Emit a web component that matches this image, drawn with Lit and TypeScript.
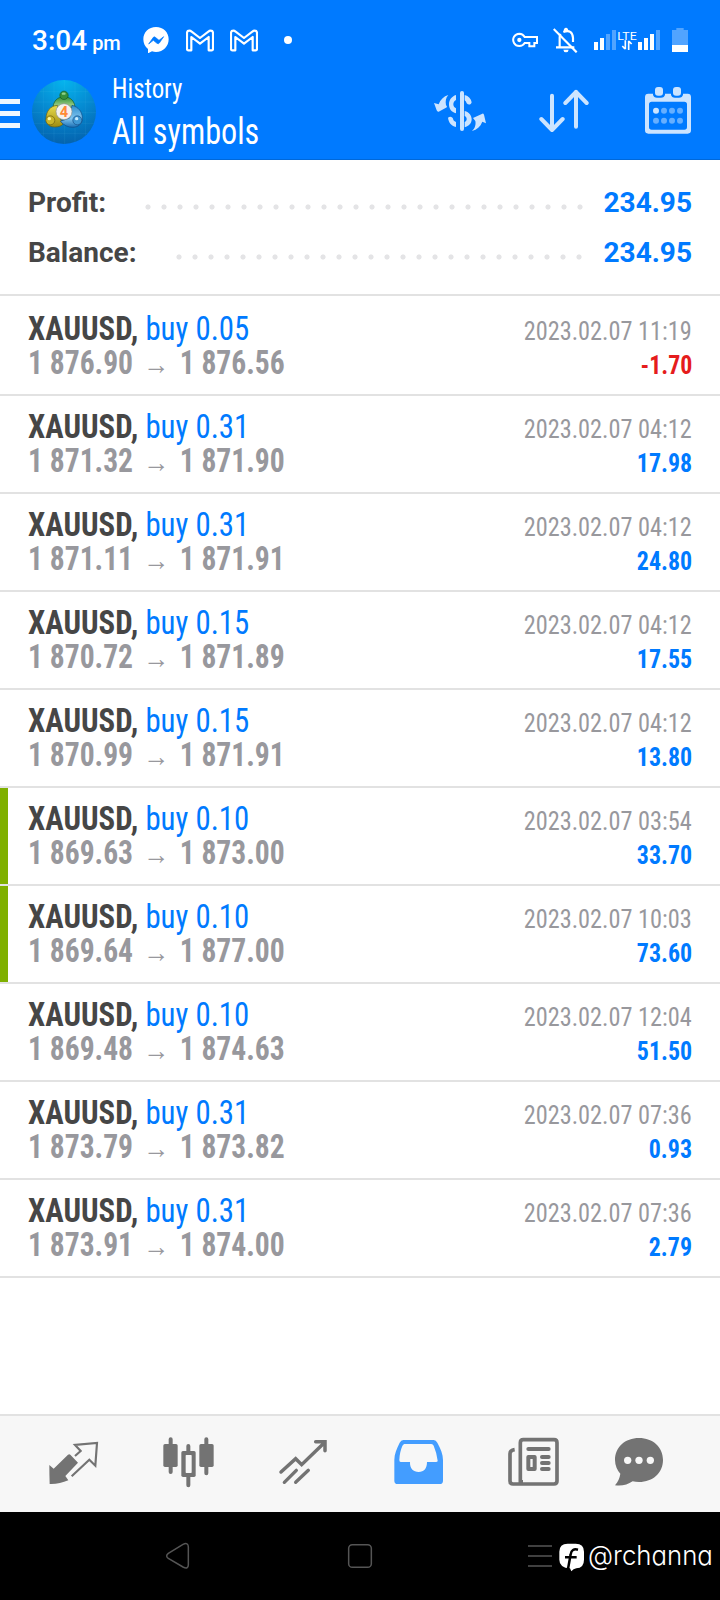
import { LitElement, html, css, svg } from "lit";
import { customElement, property } from "lit/decorators.js";

interface Deal {
  volume: string;
  open: string;
  close: string;
  time: string;
  profit: string;
  marked?: boolean;
}

const DEALS: Deal[] = [
  { volume: "0.05", open: "1 876.90", close: "1 876.56", time: "2023.02.07 11:19", profit: "-1.70" },
  { volume: "0.31", open: "1 871.32", close: "1 871.90", time: "2023.02.07 04:12", profit: "17.98" },
  { volume: "0.31", open: "1 871.11", close: "1 871.91", time: "2023.02.07 04:12", profit: "24.80" },
  { volume: "0.15", open: "1 870.72", close: "1 871.89", time: "2023.02.07 04:12", profit: "17.55" },
  { volume: "0.15", open: "1 870.99", close: "1 871.91", time: "2023.02.07 04:12", profit: "13.80" },
  { volume: "0.10", open: "1 869.63", close: "1 873.00", time: "2023.02.07 03:54", profit: "33.70", marked: true },
  { volume: "0.10", open: "1 869.64", close: "1 877.00", time: "2023.02.07 10:03", profit: "73.60", marked: true },
  { volume: "0.10", open: "1 869.48", close: "1 874.63", time: "2023.02.07 12:04", profit: "51.50" },
  { volume: "0.31", open: "1 873.79", close: "1 873.82", time: "2023.02.07 07:36", profit: "0.93" },
  { volume: "0.31", open: "1 873.91", close: "1 874.00", time: "2023.02.07 07:36", profit: "2.79" },
];

/* Icons are drawn on a grid three times finer than their size on screen. */
const icon = (x: number, y: number, w: number, h: number, body: unknown) => html`<svg
  width=${w / 3} height=${h / 3} viewBox="${x} ${y} ${w} ${h}" fill="none">${body}</svg>`;

@customElement("status-bar")
class StatusBar extends LitElement {
  static styles = css`
    :host { display: flex; align-items: center; height: 48px; padding: 16px 32px 0; color: #fff; }
    svg { display: block; flex: none; }
    .time { font-size: 28px; font-weight: 500; line-height: 34px; width: 111px; white-space: nowrap; padding-top: 4px; }
    .time small { font-size: 20px; margin-left: 5px; }
    .left { display: flex; align-items: center; gap: 16px; }
    .left .dot { margin-left: 10px; }
    .right { display: flex; align-items: center; margin-left: auto; }
    .right .bell { margin-left: 15px; }
    .right .cell { margin-left: 16px; }
    .right .battery { margin-left: 11px; }
  `;
  render() {
    const mail = icon(558, 84, 84, 69, svg`
      <path d="M561 96v48q0 4 4 4h9V108l26 20 26-20v40h9q4 0 4-4V96q0-7-7-7-4 0-7 3l-25 19-25-19q-3-3-7-3-7 0-7 7z"
        stroke="#fff" stroke-width="6.5" stroke-linejoin="round"/>`);
    return html`
      <div class="time">3:04<small>pm</small></div>
      <div class="left">
        ${icon(429, 81, 81, 78, svg`
          <path d="M468 81c-22 0-38 16-38 37 0 12 5 22 14 29v13l12-6c4 1 8 2 12 2 22 0 38-17 38-38s-16-37-38-37z" fill="#fff"/>
          <path d="M446 132l14-20q3-3 6 0l11 9 14-11-13 19q-3 4-7 1l-11-9z" fill="#007aff" stroke="#007aff" stroke-width="2" stroke-linejoin="round"/>`)}
        ${mail}${mail}
        <span class="dot">${icon(852, 108, 24, 24, svg`<circle cx="864" cy="120" r="12" fill="#fff"/>`)}</span>
      </div>
      <div class="right">
        ${icon(456, 97, 78, 48, svg`
          <path d="M478 102a18.500 18.500 0 1 0 16 28h14v10h15v-10h8v-18h-37a18.500 18.500 0 0 0-16-10z" stroke="#fff" stroke-width="6"/>
          <circle cx="478" cy="121" r="6.500" fill="#fff"/>`)}
        <span class="bell">${icon(579, 82, 75, 78, svg`
          <path d="M588 143h55M599 143v-30q0-6 3-10M610 97q27-10 29 18v12" stroke="#fff" stroke-width="6.500"/>
          <path d="M611 95q0-11 7-11t7 11zM610 150h16q-1 8-8 8t-8-8z" fill="#fff"/>
          <path d="M581 88l69 70" stroke="#fff" stroke-width="6.500"/>`)}</span>
        <span class="cell">${icon(702, 84, 201, 72, svg`
          <path d="M702 126h12v24h-12zM720 114h12v36h-12zM834 126h12v24h-12zM852 114h12v36h-12zM870 102h12v48h-12z" fill="#fff"/>
          <path d="M738 102h12v48h-12zM756 90h12v60h-12zM888 90h12v60h-12z" fill="#fff" fill-opacity=".32"/>
          <text x="772" y="120" font-size="34" textLength="58" lengthAdjust="spacingAndGlyphs" fill="#fff">LTE</text>
          <path d="M796 121v27M795 147l-8-9M806 150v-28M807 124l8 8" stroke="#fff" stroke-width="5"/>`)}</span>
        <span class="battery">${icon(936, 84, 48, 72, svg`
          <path d="M936 90h13v-6h22v6h13v45h-48z" fill="#fff" fill-opacity=".32"/>
          <path d="M936 135h48v21h-48z" fill="#fff"/>`)}</span>
      </div>`;
  }
}

@customElement("app-bar")
class AppBar extends LitElement {
  static styles = css`
    :host { display: flex; align-items: center; height: 96px; color: #fff; box-shadow: inset 0 -1px #0068d9; box-sizing: border-box; }
    svg { display: block; flex: none; }
    .menu { width: 20px; margin-right: 12px; padding-top: 3px; }
    .titles { margin-left: 16px; font-family: "Roboto Condensed", Roboto, sans-serif; font-stretch: 75%; white-space: nowrap; }
    .sub, .title { transform-origin: left; line-height: 40px; }
    .sub { font-size: 27px; height: 42px; line-height: 39px; margin-top: -2px; transform: scaleX(0.922); }
    .title { font-size: 36px; transform: scaleX(0.895); }
    .actions { display: flex; align-items: center; margin: 0 29px 0 auto; padding-bottom: 2px; }
    .sort { margin: 0 56px 0 52px; }
  `;
  render() {
    return html`
      <div class="menu">${icon(0, 294, 60, 93, svg`<path d="M0 297h60v15H0zM0 333h60v15H0zM0 369h60v15H0z" fill="#fff" fill-opacity=".93"/>`)}</div>
      ${icon(36, 30, 192, 192, svg`
        <defs>
          <radialGradient id="sky" cx=".5" cy="0" r="1"><stop offset="0" stop-color="#05b5ee"/><stop offset=".5" stop-color="#058bd2"/><stop offset="1" stop-color="#0463ae"/></radialGradient>
          <linearGradient id="g" x2="0" y2="1"><stop stop-color="#2d8c34"/><stop offset=".5" stop-color="#8fc77e"/><stop offset="1" stop-color="#1f7a2c"/></linearGradient>
          <linearGradient id="y" x2="0" y2="1"><stop stop-color="#e8dc4c"/><stop offset="1" stop-color="#a08c10"/></linearGradient>
          <linearGradient id="b" x2="0" y2="1"><stop stop-color="#2f8fd0"/><stop offset=".6" stop-color="#7fc4ee"/><stop offset="1" stop-color="#1a6fb5"/></linearGradient>
          <clipPath id="disc"><circle cx="132" cy="126" r="96"/></clipPath>
        </defs>
        <circle cx="132" cy="126" r="96" fill="url(#sky)"/>
        <path clip-path="url(#disc)" d="M70 20v210M102 20v210M134 20v210M165 20v210M196 20v210M30 65h210M30 96h210M30 128h210M30 160h210M30 190h210" stroke="#6cd0f5" stroke-opacity=".14" stroke-width="2"/>
        <path d="M99 120c-2-26 14-40 33-40s35 14 33 40l-15 8H114z" fill="url(#g)" stroke="#145c22" stroke-width="2"/>
        <circle cx="132" cy="76" r="12.500" fill="#36903b" stroke="#145c22" stroke-width="2"/><ellipse cx="131" cy="71" rx="6" ry="3.500" fill="#8fd08a"/>
        <path d="M112 106c-22 2-33 18-34 38 0 18 10 27 26 27 12 0 20-3 25-9l-14-28z" fill="url(#y)" stroke="#665c10" stroke-width="2"/>
        <circle cx="91" cy="151" r="13.500" fill="#c9b52a" stroke="#6c5d0c" stroke-width="2"/><circle cx="88" cy="146" r="5" fill="#fff8a0"/>
        <path d="M156 106c20 5 31 20 31 38 0 19-14 28-29 28-14 0-26-6-37-18l28-10z" fill="url(#b)" stroke="#124a85" stroke-width="2"/>
        <circle cx="172" cy="151" r="13.500" fill="#3e97d4" stroke="#124a85" stroke-width="2"/><circle cx="170" cy="146" r="5" fill="#c6ebff"/>
        <circle cx="132" cy="125" r="24" fill="#f4f1ee" stroke="#8b928e" stroke-width="2"/>
        <text x="132" y="141" font-size="44" font-weight="700" text-anchor="middle" fill="#ff8a35">4</text>`)}
      <div class="titles">
        <div class="sub">History</div>
        <div class="title">All symbols</div>
      </div>
      <div class="actions">
        ${icon(219, 270, 162, 126, svg`
          <path d="M306 279v108" stroke="#cce4ff" stroke-width="12" stroke-linecap="round"/>
          <path d="M288 285v15c-5 3-8 7-8 13s3 10 8 12v15c-13-3-21-13-21-27 0-13 8-24 21-28zM314 285c12 3 19 11 21 22-2 8-10 9-15 3-1-4-3-7-6-9zM314 333c14 4 21 14 21 25s-8 21-21 24v-16c4-2 6-5 6-9s-2-7-6-9zM264 353c7-5 14-2 16 6 1 3 4 5 8 7v15c-15-4-22-14-24-28z" fill="#cce4ff"/>
          <path d="M265 285c-8 9-9 18-7 30l3 5q0 2-3 3l-22 12q-4 1-6-4l-8-22 14 4c5-14 15-24 29-28zM336 393c10-9 12-20 10-30l-7-9 28-13q3-1 5 3l6 26-11-5c-6 15-16 24-31 28z" fill="#cce4ff"/>`)}
        <span class="sort">${icon(537, 268, 150, 132, svg`
          <path d="M576 288v102M544 358l32 33 32-33M648 381V276M616 310l32-33 32 33" stroke="#cce4ff" stroke-width="12" stroke-linecap="round" stroke-linejoin="round"/>`)}</span>
        ${icon(855, 262, 138, 144, svg`
          <path fill-rule="evenodd" d="M865 282h14v3q2 9 12 9h12q10 0 12-9v-3h18v3q2 9 12 9h12q10 0 12-9v-3h14q10 0 10 10v100q0 10-10 10H865q-10 0-10-10V292q0-10 10-10zM875 306q-8 0-8 8v68q0 8 8 8h98q8 0 8-8v-68q0-8-8-8z" fill="#cce4ff"/>
          <rect x="885" y="262" width="24" height="26" rx="9" fill="#cce4ff"/><rect x="939" y="262" width="24" height="26" rx="9" fill="#cce4ff"/>
          <circle cx="888" cy="333" r="9" fill="#cce4ff"/>
          <g fill="#66afff"><circle cx="912" cy="333" r="9"/><circle cx="936" cy="333" r="9"/><circle cx="960" cy="333" r="9"/><circle cx="888" cy="363" r="9"/><circle cx="912" cy="363" r="9"/><circle cx="936" cy="363" r="9"/><circle cx="960" cy="363" r="9"/></g>`)}
      </div>`;
  }
}

@customElement("summary-line")
class SummaryLine extends LitElement {
  @property() label = "";
  @property() value = "";
  static styles = css`
    :host { display: flex; height: 50px; line-height: 34px; font-size: 28px; font-weight: 700; color: #464646; }
    .dots {
      flex: 1; margin: 13px 14px 0 34px; height: 16px;
      background: radial-gradient(circle at 8px 8px, #e4e4e6 2.1px, transparent 3px) 0 0 / 16px 16px repeat-x;
    }
    .value { color: #007aff; }
  `;
  render() {
    return html`<span>${this.label}</span><span class="dots"></span><span class="value">${this.value}</span>`;
  }
}

@customElement("deal-row")
class DealRow extends LitElement {
  @property({ attribute: false }) deal!: Deal;
  static styles = css`
    :host { display: block; border-bottom: 2px solid #e2e2e2; font-family: "Roboto Condensed", Roboto, sans-serif; font-stretch: 75%; }
    .body { height: 96px; padding: 14px 28px 0; box-sizing: border-box; }
    .marked { box-shadow: inset 8px 0 #7fb000; }
    .line { display: flex; justify-content: space-between; align-items: baseline; height: 34px; line-height: 33px; font-size: 33px; white-space: pre; }
    .order { transform: scaleX(0.934); transform-origin: left; }
    .symbol { font-weight: 700; color: #464646; }
    .side { color: #007aff; }
    .prices { font-weight: 700; color: #98989d; transform: scaleX(0.896); transform-origin: left; }
    .arrow { display: inline-block; width: 52px; text-align: center; font: 400 29px/20px "Liberation Sans", sans-serif; }
    .time, .profit { font-size: 26px; transform: scaleX(0.935); transform-origin: right; }
    .time { color: #98989d; }
    .profit { font-weight: 700; color: #007aff; transform: scaleX(0.92); }
    .loss { color: #e51c1c; }
  `;
  render() {
    const d = this.deal;
    return html`<div class="body ${d.marked ? "marked" : ""}">
      <div class="line"><span class="order"><span class="symbol">XAUUSD,</span><span class="side"> buy ${d.volume}</span></span><span class="time">${d.time}</span></div>
      <div class="line"><span class="prices">${d.open}<span class="arrow">→</span>${d.close}</span><span class="profit ${d.profit.startsWith("-") ? "loss" : ""}">${d.profit}</span></div>
    </div>`;
  }
}

@customElement("tab-bar")
class TabBar extends LitElement {
  static styles = css`
    :host { display: flex; height: 98px; box-sizing: border-box; border-top: 2px solid #e2e2e2; background: #f7f7f7; padding-left: 16px; }
    .tab { width: 115px; display: flex; justify-content: center; padding-top: 18px; }
    .last { width: 96px; }
    svg { display: block; }
  `;
  render() {
    const c = "#737373";
    return html`
      <div class="tab">${icon(138, 102, 165, 168, svg`
        <path d="M148 195l13 11 43-42q4-3 7 0l23 24-38 40 9 13q-27 12-56 11-1-31-1-57z" fill=${c}/>
        <path d="M225 168l17-15-17-18 66-6-5 68-18-18-53 50" stroke=${c} stroke-width="6.500"/>`)}</div>
      <div class="tab">${icon(483, 102, 165, 168, svg`
        <path d="M512 118v98M565 138v118M619 118v102" stroke=${c} stroke-width="12" stroke-linecap="round"/>
        <rect x="490" y="132" width="43" height="69" rx="5" fill=${c}/><rect x="598" y="132" width="43" height="69" rx="5" fill=${c}/>
        <rect x="544" y="153" width="43" height="78" rx="5" fill=${c}/><rect x="557" y="165" width="18" height="54" rx="2" fill="#f7f7f7"/>`)}</div>
      <div class="tab">${icon(828, 102, 165, 168, svg`
        <path d="M843 216l44-40 18 18 68-66M947 125h28v27" stroke=${c} stroke-width="10.500" stroke-linecap="round"/>
        <path d="M853 247l36-36M887 247l38-36" stroke=${c} stroke-width="10" stroke-linecap="round"/>`)}</div>
      <div class="tab">${icon(93, 102, 165, 168, svg`
        <path fill-rule="evenodd" d="M130 120h91q7 0 11 8c10 18 17 34 17 52v62q0 10-10 10H113q-10 0-10-10v-62c0-18 7-34 16-52q4-8 11-8zM133 132q-4 1-6 6c-5 12-8 24-9 42q0 6 4 6h28c-1 20 10 30 26 30s25-10 25-30h27q5 0 5-4-3-24-12-45-2-5-7-5z" fill="#439dff"/>`)}</div>
      <div class="tab">${icon(438, 102, 165, 168, svg`
        <path d="M481 252V128q0-9 9-9h92q9 0 9 9v115q0 9-9 9H459q-9 0-9-9v-82q0-10 14-12" stroke=${c} stroke-width="11"/>
        <path d="M477 240h12v15h-12z" fill=${c}/>
        <path d="M505 147h61M546 171h20M546 189h20M546 207h20" stroke=${c} stroke-width="12" stroke-linecap="round"/>
        <rect x="505" y="171" width="19" height="36" stroke=${c} stroke-width="12" stroke-linejoin="round"/>`)}</div>
      <div class="tab last">${icon(756, 102, 162, 168, svg`
        <path d="M837 114c-42 0-72 28-72 66 0 17 7 31 16 41-2 14-7 25-16 35 21 3 38-2 53-12 6 1 12 2 19 2 42 0 72-28 72-66s-30-66-72-66z" fill=${c}/>
        <g fill="#f7f7f7"><circle cx="803" cy="181" r="11"/><circle cx="837" cy="181" r="11"/><circle cx="871" cy="181" r="11"/></g>`)}</div>`;
  }
}

@customElement("system-nav")
class SystemNav extends LitElement {
  static styles = css`
    :host { display: flex; align-items: center; height: 88px; padding-left: 165px; background: #000; box-sizing: border-box; }
    svg { display: block; flex: none; }
    .home { margin-left: 157px; }
    .recent { margin-left: 155px; }
    .fb { margin-left: 7px; padding-top: 4px; }
    .tag { margin-left: 4px; color: #fff; font: 300 27px/34px Inter, sans-serif; font-feature-settings: "cv11"; transform: scaleX(0.955); transform-origin: left; }
  `;
  render() {
    return html`
      ${icon(495, 427, 75, 84, svg`<path d="M549 434q16-7 16 8v53q0 15-16 7l-44-26q-10-7 0-15z" stroke="#555" stroke-width="4.500"/>`)}
      <span class="home">${icon(1041, 429, 78, 78, svg`<rect x="1046" y="434" width="68" height="68" rx="11" stroke="#555" stroke-width="4.500"/>`)}</span>
      <span class="recent">${icon(504, 432, 72, 78, svg`<path d="M504 441h72M504 471h72M504 501h72" stroke="#555" stroke-width="5"/>`)}</span>
      <span class="fb">${icon(598, 430, 75, 90, svg`
        <path d="M624 432h24q25 0 25 24v24q0 25-23 26-9 1-15 9l-4-9q-32-2-32-26v-24q0-24 25-24z" fill="#fff"/>
        <path d="M655 450q-19-5-22 14l-8 44M616 473h35" stroke="#000" stroke-width="7.500"/>`)}</span>
      <span class="tag">@rchanna</span>`;
  }
}

@customElement("app-root")
class AppRoot extends LitElement {
  static styles = css`
    :host { display: flex; flex-direction: column; height: 1600px; width: 720px; background: #fff; font-family: Roboto, sans-serif; overflow: hidden; }
    .top { background: #007aff; }
    .summary { height: 136px; box-sizing: border-box; padding: 26px 28px 0; border-bottom: 2px solid #e2e2e2; }
    .deals { flex: 1; padding-top: 2px; }
  `;
  render() {
    return html`
      <div class="top"><status-bar></status-bar><app-bar></app-bar></div>
      <div class="summary">
        <summary-line label="Profit:" value="234.95"></summary-line>
        <summary-line label="Balance:" value="234.95"></summary-line>
      </div>
      <div class="deals">${DEALS.map((d) => html`<deal-row .deal=${d}></deal-row>`)}</div>
      <tab-bar></tab-bar>
      <system-nav></system-nav>`;
  }
}
